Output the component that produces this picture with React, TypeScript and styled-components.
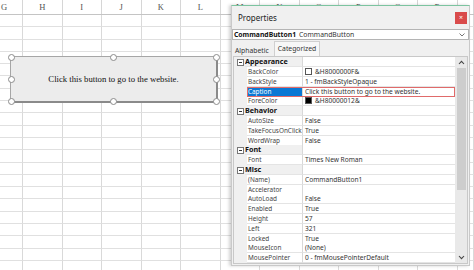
import React from "react";
import styled, { createGlobalStyle } from "styled-components";

const Global = createGlobalStyle`
  html, body { margin: 0; padding: 0; background: #fff; }
  body { width: 474px; height: 270px; overflow: hidden; }
`;

const UI = `"Noto Sans", "DejaVu Sans", sans-serif`;

const Stage = styled.div`
  position: relative;
  width: 474px;
  height: 270px;
  overflow: hidden;
  background: #fff;
`;

/* ---------- spreadsheet ---------- */
const Sheet = styled.div`
  display: flex;
  flex-direction: column;
  width: 100%;
  height: 100%;
`;
const TopStrip = styled.div`
  height: 5px;
  background: #e6e6e6;
`;
const COLS = `23px repeat(11, 39.5px) 1fr`;
const HeaderRow = styled.div`
  display: grid;
  grid-template-columns: ${COLS};
  height: 14px;
  border-bottom: 1px solid #c4c4c4;
  background: #fff;
`;
const ColHead = styled.div<{ $partial?: boolean }>`
  font-family: "Liberation Serif", serif;
  font-size: 8.5px;
  color: #555;
  line-height: 14px;
  text-align: ${(p) => (p.$partial ? "left" : "center")};
  padding-left: ${(p) => (p.$partial ? "1px" : "0")};
  border-right: 1px solid #d6d6d6;
`;
const Body = styled.div`
  display: grid;
  grid-template-columns: ${COLS};
  grid-auto-rows: 12.3px;
`;
const Cell = styled.div`
  border-right: 1px solid #d9d9d9;
  border-bottom: 1px solid #e0e0e0;
`;

/* ---------- command button on the sheet ---------- */
const ButtonObj = styled.div`
  position: absolute;
  left: 10px;
  top: 56px;
  width: 205px;
  height: 44px;
  background: #ececec;
  border: 1px solid #a6a6a6;
  border-right: 2px solid #8a8a8a;
  border-bottom: 2px solid #8a8a8a;
  display: flex;
  align-items: center;
  justify-content: center;
  font-family: "Liberation Serif", serif;
  font-size: 8.7px;
  color: #111;
`;
const Handle = styled.span<{ $x: string; $y: string }>`
  position: absolute;
  left: ${(p) => p.$x};
  top: ${(p) => p.$y};
  width: 5px;
  height: 5px;
  margin: -3.5px 0 0 -3.5px;
  border-radius: 50%;
  background: #fff;
  border: 1px solid #8c8c8c;
`;

/* ---------- properties window ---------- */
const Window = styled.div`
  position: absolute;
  left: 231px;
  top: 5px;
  width: 237px;
  height: 259px;
  background: #f0f0f0;
  border: 1px solid #c9c9c9;
  border-top: 1px solid #7cc4a0;
  box-shadow: -2px 0 3px rgba(0, 0, 0, 0.18);
  display: flex;
  flex-direction: column;
  font-family: ${UI};
`;
const TitleBar = styled.div`
  height: 24px;
  display: flex;
  align-items: center;
  justify-content: space-between;
  padding: 0 1px 0 6px;
`;
const Title = styled.span`
  font-size: 8px;
  color: #222;
`;
const Close = styled.span`
  width: 12px;
  height: 12px;
  margin-right: 1px;
  margin-top: 1px;
  background: #d94b4b;
  color: #fff;
  font-size: 7px;
  line-height: 12px;
  text-align: center;
`;
const Combo = styled.div`
  height: 10px;
  background: #fff;
  border: 1px solid #b4b4b4;
  display: flex;
  align-items: center;
  padding: 0 3px 0 1px;
  font-size: 6.8px;
  color: #333;
`;
const ComboBold = styled.b`
  font-weight: 700;
  color: #111;
  margin-right: 3px;
`;
const Chevron = styled.svg`
  margin-left: auto;
`;
const Tabs = styled.div`
  display: flex;
  align-items: flex-end;
  height: 15px;
  padding-left: 1px;
  margin-top: 1px;
`;
const Tab = styled.div<{ $active?: boolean }>`
  font-size: 6.8px;
  color: #333;
  height: ${(p) => (p.$active ? "14px" : "11px")};
  line-height: ${(p) => (p.$active ? "13px" : "11px")};
  padding: 0 ${(p) => (p.$active ? "3px" : "2px")};
  margin-left: ${(p) => (p.$active ? "3px" : "0")};
  background: ${(p) => (p.$active ? "#f7f7f7" : "transparent")};
  border: ${(p) => (p.$active ? "1px solid #d0d0d0" : "none")};
  border-bottom: none;
`;
const GridFrame = styled.div`
  flex: 1;
  margin: 0 1px 1px 1px;
  border: 1px solid #c8c8c8;
  display: flex;
  background: #fff;
`;
const Rows = styled.div`
  flex: 1;
  display: grid;
  grid-auto-rows: 9.8px;
  align-content: start;
`;
const Row = styled.div`
  display: grid;
  grid-template-columns: 13px 1fr;
  background: #f0f0f0;
`;
const Expander = styled.span`
  display: flex;
  align-items: center;
  justify-content: center;
`;
const Box = styled.span`
  width: 5px;
  height: 5px;
  border: 1px solid #777;
  background: #fff;
  position: relative;
  &::after {
    content: "";
    position: absolute;
    left: 1px;
    top: 2px;
    width: 3px;
    height: 1px;
    background: #333;
  }
`;
const Cells = styled.div<{ $hl?: boolean }>`
  display: grid;
  grid-template-columns: 56px 1fr;
  position: relative;
  outline: ${(p) => (p.$hl ? "1.5px solid #e06a6a" : "none")};
  outline-offset: -1px;
  z-index: ${(p) => (p.$hl ? 1 : 0)};
`;
const NameCell = styled.div<{ $cat?: boolean; $sel?: boolean }>`
  font-size: ${(p) => (p.$cat ? "7.2px" : "6.4px")};
  font-weight: ${(p) => (p.$cat ? 700 : 400)};
  color: ${(p) => (p.$sel ? "#fff" : p.$cat ? "#111" : "#444")};
  background: ${(p) => (p.$sel ? "#0a78d4" : p.$cat ? "#f0f0f0" : "#fff")};
  line-height: 9px;
  padding-left: ${(p) => (p.$cat ? "0" : "1px")};
  margin-left: ${(p) => (p.$cat ? "-2px" : "0")};
  border-bottom: 1px solid #e4e4e4;
  border-right: 1px solid #d8d8d8;
  white-space: nowrap;
  overflow: hidden;
`;
const ValueCell = styled.div`
  font-size: 6.6px;
  color: #333;
  line-height: 9px;
  padding-left: 2px;
  background: #fff;
  border-bottom: 1px solid #e4e4e4;
  white-space: nowrap;
  overflow: hidden;
  display: flex;
  align-items: center;
  gap: 3px;
`;
const Swatch = styled.span<{ $c: string }>`
  width: 5px;
  height: 5px;
  background: ${(p) => p.$c};
  border: 1px solid #555;
`;
const Scroll = styled.div`
  width: 12px;
  background: #e9e9e9;
  display: flex;
  flex-direction: column;
  align-items: center;
`;
const Arrow = styled.svg`
  flex: none;
  margin: 3px 0;
`;
const Thumb = styled.div`
  width: 9px;
  height: 122px;
  background: #cdcdcd;
`;
const Spacer = styled.div`
  flex: 1;
`;

type P =
  | { cat: string }
  | { name: string; value?: string; swatch?: string; sel?: boolean };

const props: P[] = [
  { cat: "Appearance" },
  { name: "BackColor", value: "&H8000000F&", swatch: "#fff" },
  { name: "BackStyle", value: "1 - fmBackStyleOpaque" },
  { name: "Caption", value: "Click this button to go to the website.", sel: true },
  { name: "ForeColor", value: "&H80000012&", swatch: "#000" },
  { cat: "Behavior" },
  { name: "AutoSize", value: "False" },
  { name: "TakeFocusOnClick", value: "True" },
  { name: "WordWrap", value: "False" },
  { cat: "Font" },
  { name: "Font", value: "Times New Roman" },
  { cat: "Misc" },
  { name: "(Name)", value: "CommandButton1" },
  { name: "Accelerator", value: "" },
  { name: "AutoLoad", value: "False" },
  { name: "Enabled", value: "True" },
  { name: "Height", value: "57" },
  { name: "Left", value: "321" },
  { name: "Locked", value: "True" },
  { name: "MouseIcon", value: "(None)" },
  { name: "MousePointer", value: "0 - fmMousePointerDefault" },
];

const cols = ["G", "H", "I", "J", "K", "L", "M", "N", "O", "P", "Q", "R", ""];

const handles: [string, string][] = [
  ["0%", "0%"], ["50%", "0%"], ["100%", "0%"],
  ["0%", "50%"], ["100%", "50%"],
  ["0%", "100%"], ["50%", "100%"], ["100%", "100%"],
];

export default function App() {
  return (
    <Stage>
      <Global />
      <Sheet>
        <TopStrip />
        <HeaderRow>
          {cols.map((c, i) => (
            <ColHead key={i} $partial={i === 0}>{c}</ColHead>
          ))}
        </HeaderRow>
        <Body>
          {Array.from({ length: 21 * 13 }).map((_, i) => (
            <Cell key={i} />
          ))}
        </Body>
      </Sheet>

      <ButtonObj>
        Click this button to go to the website.
        {handles.map(([x, y], i) => (
          <Handle key={i} $x={x} $y={y} />
        ))}
      </ButtonObj>

      <Window>
        <TitleBar>
          <Title>Properties</Title>
          <Close>×</Close>
        </TitleBar>
        <Combo>
          <ComboBold>CommandButton1</ComboBold>CommandButton
          <Chevron width="6" height="4" viewBox="0 0 6 4">
            <path d="M0.5 0.5 L3 3 L5.5 0.5" fill="none" stroke="#666" strokeWidth="0.9" />
          </Chevron>
        </Combo>
        <Tabs>
          <Tab>Alphabetic</Tab>
          <Tab $active>Categorized</Tab>
        </Tabs>
        <GridFrame>
          <Rows>
            {props.map((p, i) =>
              "cat" in p ? (
                <Row key={i}>
                  <Expander><Box /></Expander>
                  <Cells>
                    <NameCell $cat>{p.cat}</NameCell>
                    <ValueCell />
                  </Cells>
                </Row>
              ) : (
                <Row key={i}>
                  <Expander />
                  <Cells $hl={p.sel}>
                    <NameCell $sel={p.sel}>{p.name}</NameCell>
                    <ValueCell>
                      {p.swatch && <Swatch $c={p.swatch} />}
                      {p.value}
                    </ValueCell>
                  </Cells>
                </Row>
              )
            )}
          </Rows>
          <Scroll>
            <Arrow width="7" height="5" viewBox="0 0 7 5">
              <path d="M1 4 L3.5 1.3 L6 4" fill="none" stroke="#444" strokeWidth="1.1" />
            </Arrow>
            <Thumb />
            <Spacer />
            <Arrow width="7" height="5" viewBox="0 0 7 5">
              <path d="M1 1 L3.5 3.7 L6 1" fill="none" stroke="#444" strokeWidth="1.1" />
            </Arrow>
          </Scroll>
        </GridFrame>
      </Window>
    </Stage>
  );
}
